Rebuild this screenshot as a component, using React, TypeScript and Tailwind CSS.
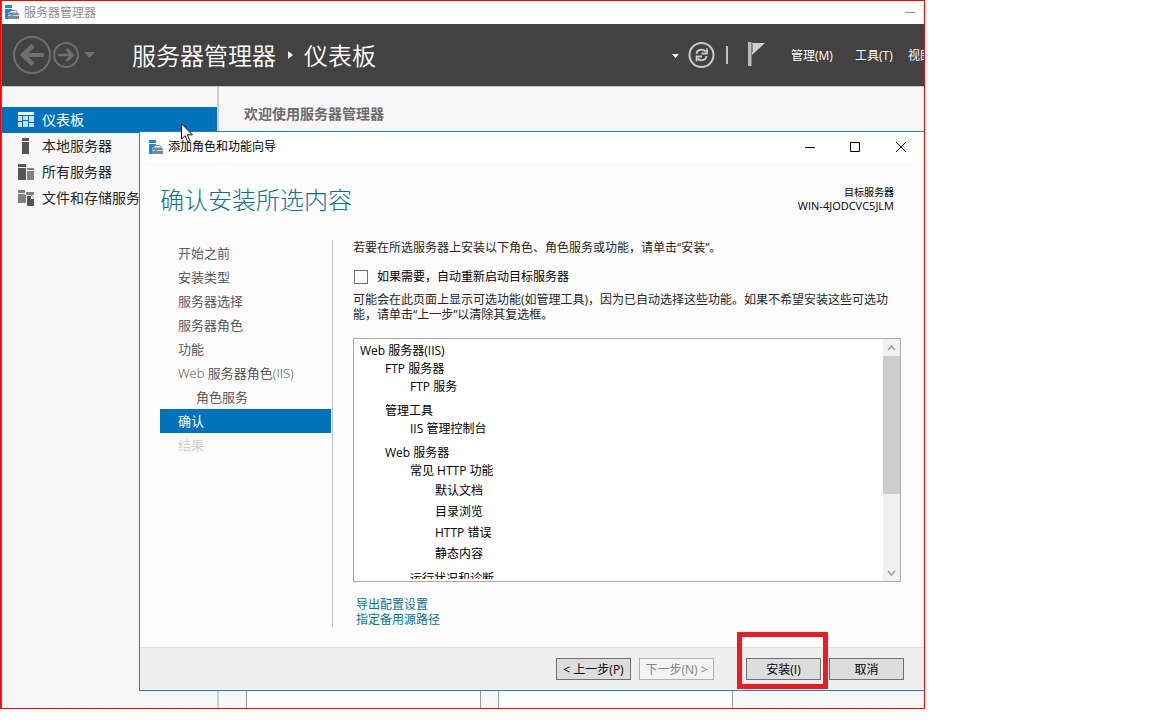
import type { ReactNode } from "react";

const sidebarItems = [
  { label: "仪表板", icon: <DashboardIcon />, active: true },
  { label: "本地服务器", icon: <LocalServerIcon /> },
  { label: "所有服务器", icon: <AllServersIcon /> },
  { label: "文件和存储服务", icon: <StorageIcon /> },
];

const steps = [
  { label: "开始之前" },
  { label: "安装类型" },
  { label: "服务器选择" },
  { label: "服务器角色" },
  { label: "功能" },
  { label: "Web 服务器角色(IIS)" },
  { label: "角色服务", nested: true },
  { label: "确认", current: true },
  { label: "结果", disabled: true },
];

function ServerManagerIcon() {
  return (
    <svg width="14" height="14" viewBox="0 0 14 14" aria-hidden="true">
      <path d="M0 0h7v3H0zM0 4h7v1L5 7 3 8v6H0z" fill="#1e88d8" />
      <path d="M5 7.5V6.8Q5 5.5 6.5 5.5h4q1.500 0 1.500 1.300v.7" fill="none" stroke="#6f8fa6" />
      <path d="M4 7.500h9l1 1.500v5H3V9z" fill="#6f8fa6" />
      <path d="M3 10.500h3M8 10.500h6" stroke="#dbe5ec" strokeWidth=".8" />
    </svg>
  );
}

function DashboardIcon() {
  return (
    <svg width="16" height="16" viewBox="0 0 16 16" aria-hidden="true">
      <path d="M0 0h16v3H0z" fill="#fff" />
      <path d="M0 4h4v5H0zM0 10h4v5H0zM5 4h5v4H5zM11 4h5v6h-5zM5 9h5v6H5zM11 11h5v4h-5z" fill="#c8e2f4" />
    </svg>
  );
}

function LocalServerIcon() {
  return (
    <svg width="16" height="16" viewBox="0 0 16 16" aria-hidden="true">
      <path d="M4 0h7v3H4zM4 4h7v12H4z" fill="#555" />
    </svg>
  );
}

function AllServersIcon() {
  return (
    <svg width="16" height="16" viewBox="0 0 16 16" aria-hidden="true">
      <path d="M0 0h8v3H0zM0 4h8v12H0z" fill="#555" />
      <path d="M9 4h7v2H9zM9 7h7v9H9z" fill="#808080" />
    </svg>
  );
}

function StorageIcon() {
  return (
    <svg width="16" height="16" viewBox="0 0 16 16" aria-hidden="true">
      <path d="M0 0h7v3H0zM8 2h8v3H8zM0 4h7v1h1v8H0z" fill="#808080" />
      <path d="M9 6h4v3h3v7H9z" fill="#555" />
      <path d="M13 6h1.500L16 7.500V9" fill="none" stroke="#777" strokeWidth=".8" />
    </svg>
  );
}

function Cursor() {
  return (
    <svg width="13" height="20" viewBox="0 0 13 20" aria-hidden="true">
      <path d="M.5 .8v15.400l3.600-3.500 2.500 6 2.300-1-2.500-5.900h5z" fill="#fff" stroke="#111" />
    </svg>
  );
}

function NavButton({ label, children }: { label: string; children: ReactNode }) {
  return (
    <button type="button" aria-label={label} className="flex shrink-0 items-center justify-center">
      {children}
    </button>
  );
}

function DialogButton({ children, disabled }: { children: ReactNode; disabled?: boolean }) {
  return (
    <button
      type="button"
      disabled={disabled}
      className="h-[22px] w-[75px] whitespace-nowrap border border-[#707070] bg-[#dddddd] pt-0.5 text-center text-xs leading-[18px] text-black disabled:border-[#adb2b5] disabled:bg-[#f4f4f4] disabled:text-[#838383]"
    >
      {children}
    </button>
  );
}

function Header() {
  return (
    <header className="flex h-[62px] shrink-0 items-center overflow-hidden whitespace-nowrap bg-[#424242] pl-[11px] text-white">
      <NavButton label="后退">
        <svg width="38" height="38" viewBox="0 0 38 38" fill="none" stroke="#6f6f6f">
          <circle cx="19" cy="19" r="18" strokeWidth="2" />
          <path d="M9 19h22" strokeWidth="4" />
          <path d="M20 9.500L10 19l10 9.500" strokeWidth="4.500" />
        </svg>
      </NavButton>
      <NavButton label="前进">
        <svg width="30" height="28" viewBox="0 0 30 28" fill="none" stroke="#6f6f6f">
          <circle cx="15" cy="14" r="12" strokeWidth="2" />
          <path d="M7 14h14" strokeWidth="2.500" />
          <path d="M15.500 8l6 6-6 6" strokeWidth="3" />
        </svg>
      </NavButton>
      <NavButton label="历史记录">
        <svg width="18" height="8" viewBox="0 0 18 8">
          <path d="M3 1h11L8.500 7z" fill="#6f6f6f" />
        </svg>
      </NavButton>
      <h1 className="ml-[33px] flex items-center pt-0.5 text-2xl font-[350] leading-8">
        服务器管理器
        <svg width="28" height="10" viewBox="0 0 28 10" aria-hidden="true">
          <path d="M12 0l5 4-5 4z" fill="#fff" />
        </svg>
        仪表板
      </h1>
      <div className="ml-auto flex items-center">
        <NavButton label="更多">
          <svg width="8" height="5" viewBox="0 0 8 5">
            <path d="M0 1h7L3.500 5z" fill="#fff" />
          </svg>
        </NavButton>
        <button type="button" aria-label="刷新" className="ml-2">
          <svg width="28" height="28" viewBox="0 0 28 28" fill="none" stroke="#cacaca">
            <circle cx="13.500" cy="14" r="12" strokeWidth="2" />
            <path d="M8.500 13c.3-2.700 2.300-4.200 5-4.200 2 0 3.300.7 4.200 1.800" strokeWidth="2" />
            <path d="M19 7.500v5h-5.500" strokeWidth="1.800" />
            <path d="M18.500 15c-.3 2.700-2.300 4.200-5 4.200-2 0-3.300-.7-4.200-1.800" strokeWidth="2" />
            <path d="M8.500 20.500v-5H14" strokeWidth="1.800" />
          </svg>
        </button>
        <span className="ml-2.5 h-[18px] w-0.5 bg-[#c2c2c2]" />
        <button type="button" aria-label="通知" className="ml-5">
          <svg width="18" height="28" viewBox="0 0 18 28">
            <path d="M0 1h3.500v24H0z" fill="#bdbdbd" />
            <path d="M4 2h13L4 14z" fill="#d0d0d0" />
            <path d="M4.500 3v8" stroke="#777" strokeWidth=".8" />
          </svg>
        </button>
        <nav className="ml-6 flex pt-0.5 text-xs leading-5">
          <button type="button" className="w-16 pl-px text-left">管理(M)</button>
          <button type="button" className="w-[54px] pl-px text-left">工具(T)</button>
          <button type="button" className="w-4 overflow-hidden text-left">视图</button>
        </nav>
      </div>
    </header>
  );
}

function Sidebar() {
  return (
    <aside className="w-[217px] shrink-0 border-r-2 border-[#cfcfcf] pt-5">
      <ul>
        {sidebarItems.map((item) => (
          <li key={item.label}>
            <a
              href="#"
              className={
                item.active
                  ? "flex h-[26px] items-center gap-2 whitespace-nowrap bg-[#0072bc] pl-4 text-sm text-white"
                  : "flex h-[26px] items-center gap-2 whitespace-nowrap pl-4 text-sm text-[#262626]"
              }
            >
              {item.icon}
              {item.label}
            </a>
          </li>
        ))}
      </ul>
    </aside>
  );
}

function StepList() {
  return (
    <nav className="w-[173px] shrink-0 border-r border-[#c0c0c0] pr-px">
      <ol className="pt-px text-[13px] leading-6">
        {steps.map((step) => {
          let style = "block pl-[18px] font-[350] text-[#4a4a4a]";
          if (step.nested) style = "block pl-9 font-[350] text-[#4a4a4a]";
          if (step.current) style = "block bg-[#0072bc] pl-[18px] text-white";
          if (step.disabled) style = "block pl-[18px] text-[#d0d0d0]";
          return (
            <li key={step.label}>
              <a href="#" className={style}>{step.label}</a>
            </li>
          );
        })}
      </ol>
    </nav>
  );
}

function FeatureTree() {
  return (
    <div className="flex h-[244px] border border-[#ababab] bg-white text-xs text-black">
      <div className="mb-0.5 min-w-0 flex-1 overflow-hidden pl-1.5 pt-[3px] leading-[18px]">
        <p>Web 服务器(IIS)</p>
        <ul className="space-y-1.5 pl-[25px]">
          <li>
            FTP 服务器
            <ul className="pl-[25px]">
              <li>FTP 服务</li>
            </ul>
          </li>
          <li>
            管理工具
            <ul className="pl-[25px]">
              <li>IIS 管理控制台</li>
            </ul>
          </li>
          <li>
            Web 服务器
            <ul className="space-y-1.5 pl-[25px]">
              <li>
                常见 HTTP 功能
                <ul className="pl-[25px] leading-[21px]">
                  <li>默认文档</li>
                  <li>目录浏览</li>
                  <li>HTTP 错误</li>
                  <li>静态内容</li>
                </ul>
              </li>
              <li>运行状况和诊断</li>
            </ul>
          </li>
        </ul>
      </div>
      <div className="flex w-[17px] flex-col bg-[#f0f0f0]">
        <button type="button" aria-label="向上滚动" className="flex h-[17px] items-center justify-center">
          <svg width="9" height="6" viewBox="0 0 9 6" fill="none" stroke="#9b9b9b" strokeWidth="1.500">
            <path d="M1 5l3.500-4L8 5" />
          </svg>
        </button>
        <div className="h-[138px] bg-[#cdcdcd]" />
        <button type="button" aria-label="向下滚动" className="mt-auto flex h-[17px] items-center justify-center">
          <svg width="9" height="6" viewBox="0 0 9 6" fill="none" stroke="#9b9b9b" strokeWidth="1.500">
            <path d="M1 1l3.500 4L8 1" />
          </svg>
        </button>
      </div>
    </div>
  );
}

function Wizard() {
  return (
    <section
      role="dialog"
      aria-label="添加角色和功能向导"
      className="absolute bottom-[17px] left-[137px] right-0 top-[130px] flex flex-col border-y border-l border-[#1883d7] bg-[#fcfcfc]"
    >
      <div className="flex h-[30px] shrink-0 items-center bg-white pb-px pl-[9px] pr-[17px] text-xs text-black">
        <ServerManagerIcon />
        <span className="ml-[5px] pt-px leading-5">添加角色和功能向导</span>
        <div className="ml-auto flex gap-[34px]">
          <button type="button" aria-label="最小化">
            <svg width="12" height="12" viewBox="0 0 12 12" stroke="#000">
              <path d="M2 6.500h10" />
            </svg>
          </button>
          <button type="button" aria-label="最大化">
            <svg width="12" height="12" viewBox="0 0 12 12" fill="none" stroke="#000">
              <path d="M1.500 1.500h9v9h-9z" />
            </svg>
          </button>
          <button type="button" aria-label="关闭">
            <svg width="12" height="12" viewBox="0 0 12 12" stroke="#000">
              <path d="M1 1l10 10M11 1L1 11" />
            </svg>
          </button>
        </div>
      </div>

      <div className="flex h-[78px] shrink-0 items-start justify-between pl-5 pr-[30px] pt-[23px]">
        <h2 className="text-2xl font-light leading-[30px] text-[#0a7393]">确认安装所选内容</h2>
        <div className="pt-px text-right leading-[13px] text-black">
          <p className="text-[10px]">目标服务器</p>
          <p className="text-[11px]">WIN-4JODCVC5JLM</p>
        </div>
      </div>

      <div className="flex min-h-0 flex-1 pb-5 pl-5 pr-[23px]">
        <StepList />
        <div className="ml-5 min-w-0 flex-1 text-xs leading-[15px] text-[#262626]">
          <p>若要在所选服务器上安装以下角色、角色服务或功能，请单击“安装”。</p>
          <label className="mt-3.5 flex items-center gap-[9px] pl-px text-black">
            <input type="checkbox" className="size-3.5 appearance-none border border-[#707070] bg-white" />
            如果需要，自动重新启动目标服务器
          </label>
          <p className="mb-4 mt-2 pr-1">
            可能会在此页面上显示可选功能(如管理工具)，因为已自动选择这些功能。如果不希望安装这些可选功能，请单击“上一步”以清除其复选框。
          </p>
          <FeatureTree />
          <div className="flex flex-col items-start pl-[3px] pt-[15px] text-[#0a7393]">
            <a href="#">导出配置设置</a>
            <a href="#">指定备用源路径</a>
          </div>
        </div>
      </div>

      <div className="flex h-[43px] shrink-0 items-start justify-end gap-2 border-t border-[#dcdcdc] bg-[#efefef] pr-5 pt-2.5">
        <DialogButton>&lt; 上一步(P)</DialogButton>
        <DialogButton disabled>下一步(N) &gt;</DialogButton>
        <div className="relative ml-6 flex">
          <DialogButton>安装(I)</DialogButton>
          <span className="pointer-events-none absolute -bottom-[9px] -left-[9px] -right-[7px] -top-[26px] border-[5px] border-[#ed1c24]" />
        </div>
        <DialogButton>取消</DialogButton>
      </div>
    </section>
  );
}

export default function App() {
  return (
    <div className="flex min-h-screen flex-col bg-white pb-[19px] pr-[227px] font-['Open_Sans','Noto_Sans_CJK_SC',sans-serif]" lang="zh-CN">
      <div className="flex flex-1 flex-col border border-[#ff0000]">
        <div className="relative flex flex-1 flex-col border-l border-[#666666] bg-[#f7f7f7]">
          <div className="flex h-[23px] shrink-0 items-center bg-white pb-px pl-[3px] pr-2 text-xs text-[#8c8c8c]">
            <ServerManagerIcon />
            <span className="ml-[5px] pt-px">服务器管理器</span>
            <button type="button" aria-label="最小化" className="ml-auto">
              <svg width="12" height="12" viewBox="0 0 12 12" stroke="#8c8c8c">
                <path d="M1 6.500h10" />
              </svg>
            </button>
          </div>
          <Header />
          <div className="flex flex-1 border-t border-[#c8c8c8]">
            <Sidebar />
            <main className="flex min-w-0 flex-1 flex-col">
              <h2 className="mb-4 pl-[25px] pt-[17px] text-sm font-bold text-[#6b6b6b]">欢迎使用服务器管理器</h2>
              <div className="flex flex-1 gap-[17px] pl-[27px]">
                <div className="w-[235px] border-x border-[#999999] bg-[#fcfcfc]" />
                <div className="w-[235px] border-x border-[#999999] bg-[#fcfcfc]" />
              </div>
            </main>
          </div>
          <Wizard />
          <div className="pointer-events-none absolute left-[179px] top-[122px]">
            <Cursor />
          </div>
        </div>
      </div>
    </div>
  );
}
